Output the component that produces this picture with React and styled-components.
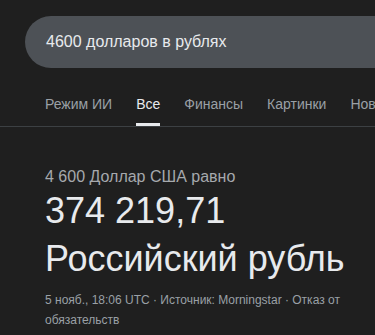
import React from 'react';
import styled, { createGlobalStyle } from 'styled-components';

const GlobalStyle = createGlobalStyle`
    body {
        margin: 0;
        background: #1f1f1f;
        font-family: 'Liberation Sans', Arial, sans-serif;
    }
`

const tabs = ['Режим ИИ', 'Все', 'Финансы', 'Картинки', 'Новости']

const App = () => {
    return (
        <Page>
            <GlobalStyle />
            <SearchBar>4600 долларов в рублях</SearchBar>

            <Tabs>
                {tabs.map((tab) => (
                    <Tab key={tab} active={tab === 'Все'}>{tab}</Tab>
                ))}
            </Tabs>

            <Result>
                <Equals>4 600 Доллар США равно</Equals>
                <Amount>374 219,71</Amount>
                <Amount>Российский рубль</Amount>
                <Footer>5 нояб., 18:06 UTC · Источник: Morningstar · Отказ от обязательств</Footer>
            </Result>
        </Page>
    );
}

export default App;

const Page = styled.div`
    width: 375px;
    height: 335px;
    overflow: hidden;
    background: #1f1f1f;
    padding-top: 16px;
    box-sizing: border-box;
`

const SearchBar = styled.div`
    margin-left: 25px;
    width: 420px;
    height: 52px;
    border-radius: 26px;
    background: #4d5156;
    color: #e8eaed;
    font-size: 16px;
    display: flex;
    align-items: center;
    padding-left: 21px;
    box-sizing: border-box;
`

const Tabs = styled.div`
    display: flex;
    gap: 24px;
    padding-left: 45px;
    margin-top: 15px;
    border-bottom: 1px solid #3c4043;
    white-space: nowrap;
    overflow: hidden;
`

const Tab = styled.div`
    font-size: 14px;
    line-height: 20px;
    padding: 11px 0 9px;
    color: ${({ active }) => (active ? '#e8eaed' : '#9aa0a6')};
    border-bottom: 3px solid ${({ active }) => (active ? '#e8eaed' : 'transparent')};
`

const Result = styled.div`
    padding: 40px 20px 0 45px;
`

const Equals = styled.div`
    font-size: 16px;
    line-height: 20px;
    color: #a6a9ad;
`

const Amount = styled.div`
    font-size: 36px;
    line-height: 48px;
    color: #e8eaed;
`

const Footer = styled.div`
    font-size: 12px;
    line-height: 20px;
    color: #9aa0a6;
    margin-top: 7px;
`
